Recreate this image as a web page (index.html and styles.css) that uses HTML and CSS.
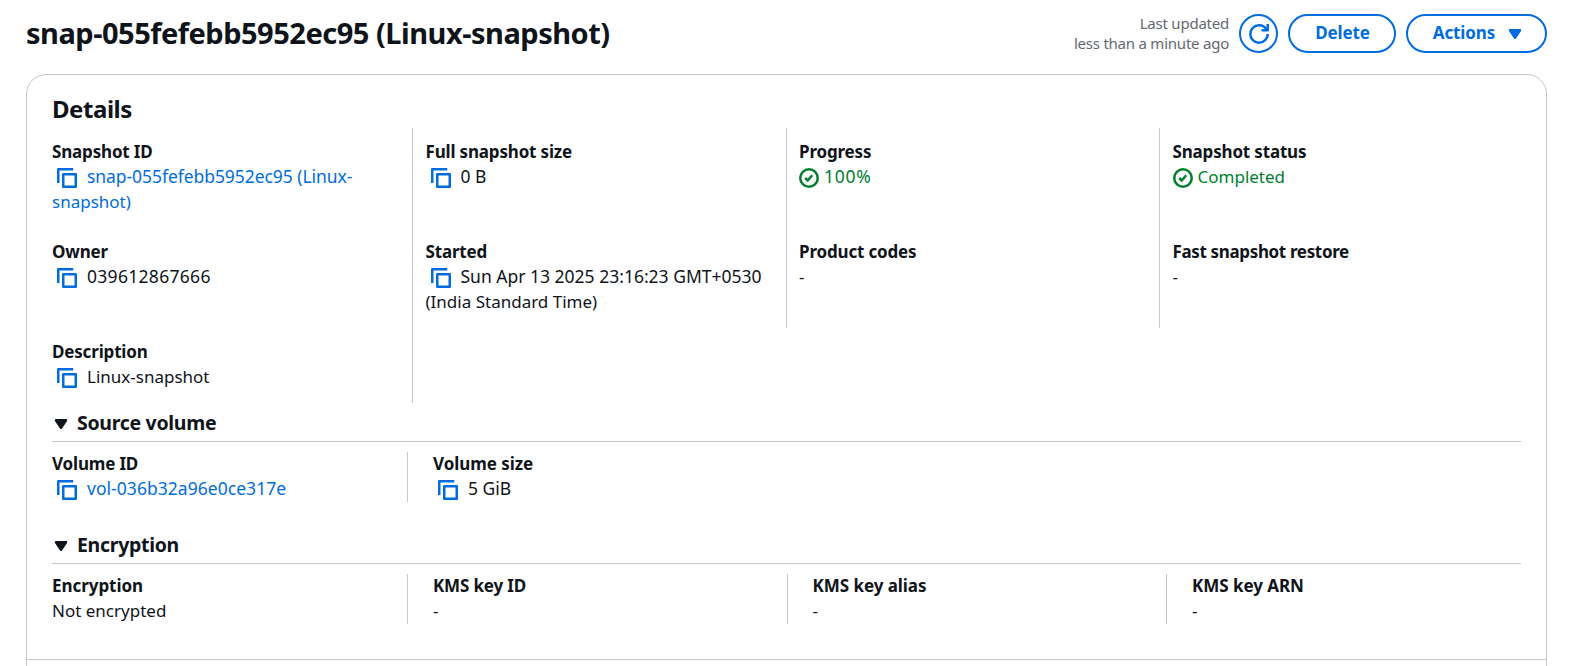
FILE: index.html
```
<!DOCTYPE html>
<html lang="en">
<head>
<meta charset="utf-8">
<title>Snapshot details</title>
<link rel="stylesheet" href="styles.css">
</head>
<body>
<svg class="defs" width="0" height="0">
  <symbol id="copy" viewBox="0 0 16 16"><path d="M15 5H5v10h10V5z"/><path d="M13 1H1v11"/></symbol>
  <symbol id="ok" viewBox="0 0 16 16"><circle cx="8" cy="8" r="7"/><path d="M5 8l2 2 3.6-4.2"/></symbol>
  <symbol id="caret" viewBox="0 0 16 16"><path d="M4 5h8l-4 6-4-6z"/></symbol>
  <symbol id="refresh" viewBox="0 0 16 16"><path d="M15 8c0 3.87-3.13 7-7 7s-7-3.13-7-7 3.13-7 7-7c2.79 0 5.2 1.63 6.33 4"/><path d="M10 5h5V0"/></symbol>
</svg>
<header class="page-header">
  <h1>snap-055fefebb5952ec95 (Linux-snapshot)</h1>
  <div class="actions">
    <p class="updated">Last updated<br>less than a minute ago</p>
    <button class="btn btn-round" aria-label="Refresh"><svg class="icon"><use href="#refresh"/></svg></button>
    <button class="btn btn-delete">Delete</button>
    <button class="btn btn-menu">Actions<svg class="icon solid"><use href="#caret"/></svg></button>
  </div>
</header>
<main class="panel">
  <h2>Details</h2>
  <div class="details">
    <div class="col">
      <dl class="cell"><dt>Snapshot ID</dt><dd><svg class="icon copy"><use href="#copy"/></svg><a><span class="id">snap-055fefebb5952ec95 (Linux-</span><br>snapshot)</a></dd></dl>
      <dl class="cell"><dt>Owner</dt><dd><svg class="icon copy"><use href="#copy"/></svg><span class="digits">039612867666</span></dd></dl>
      <dl class="cell last"><dt>Description</dt><dd><svg class="icon copy"><use href="#copy"/></svg>Linux-snapshot</dd></dl>
    </div>
    <div class="col">
      <dl class="cell"><dt>Full snapshot size</dt><dd><svg class="icon copy"><use href="#copy"/></svg><span class="short">0 B</span></dd></dl>
      <dl class="cell"><dt>Started</dt><dd><svg class="icon copy"><use href="#copy"/></svg><span class="date">Sun Apr 13 2025 23:16:23 GMT+0530</span><br>(India Standard Time)</dd></dl>
    </div>
    <div class="col">
      <dl class="cell"><dt>Progress</dt><dd class="ok"><svg class="icon"><use href="#ok"/></svg><span class="percent">100%</span></dd></dl>
      <dl class="cell"><dt>Product codes</dt><dd>-</dd></dl>
    </div>
    <div class="col">
      <dl class="cell"><dt>Snapshot status</dt><dd class="ok"><svg class="icon"><use href="#ok"/></svg>Completed</dd></dl>
      <dl class="cell"><dt class="tight">Fast snapshot restore</dt><dd>-</dd></dl>
    </div>
  </div>
  <section>
    <h3><svg class="icon solid"><use href="#caret"/></svg>Source volume</h3>
    <div class="row">
      <dl><dt>Volume ID</dt><dd><svg class="icon copy"><use href="#copy"/></svg><a class="volume">vol-036b32a96e0ce317e</a></dd></dl>
      <dl><dt class="spaced">Volume size</dt><dd><svg class="icon copy"><use href="#copy"/></svg><span class="short">5 GiB</span></dd></dl>
    </div>
  </section>
  <section>
    <h3><svg class="icon solid"><use href="#caret"/></svg>Encryption</h3>
    <div class="row">
      <dl><dt class="spaced">Encryption</dt><dd>Not encrypted</dd></dl>
      <dl><dt>KMS key ID</dt><dd>-</dd></dl>
      <dl><dt class="spaced">KMS key alias</dt><dd>-</dd></dl>
      <dl><dt class="spaced">KMS key ARN</dt><dd>-</dd></dl>
    </div>
  </section>
  <div class="panel-footer"></div>
</main>
</body>
</html>
```
FILE: styles.css
```
* { box-sizing: border-box; }
html { height: 100%; overflow: hidden; }
body {
  margin: 0;
  height: 666px;
  overflow: hidden;
  padding: 14px 23px 0 26px;
  background: #fff;
  color: #0f141a;
  font: 17px/25px "Noto Sans", "Open Sans", sans-serif;
}
h1, h2, h3, p, dl, dd { margin: 0; }
.defs { position: absolute; }

.page-header { display: flex; justify-content: space-between; height: 60px; }
h1 { font-size: 29px; line-height: 37px; font-weight: 700; letter-spacing: -0.49px; }
.actions { display: flex; gap: 10px; height: 39px; }
.updated { margin-top: -1px; font-size: 15px; line-height: 20px; letter-spacing: -0.23px; color: #656871; text-align: right; }
.btn {
  display: flex; align-items: center; justify-content: center;
  height: 39px; padding: 0 0 2px;
  border: 2px solid #006ce0; border-radius: 20px;
  background: #fff; color: #006ce0;
  font: 700 17px/25px "Noto Sans", sans-serif; letter-spacing: -0.1px;
}
.btn-round { width: 39px; padding: 0; }
.btn-delete { width: 108px; padding-left: 1px; }
.btn-menu { width: 141px; padding-left: 5px; }
.btn-menu .icon { margin: 2px 0 0 10px; }

.icon { width: 20px; height: 20px; flex: none; fill: none; stroke: currentColor; stroke-width: 2; stroke-linejoin: round; }
.icon.solid { fill: currentColor; }
.icon.copy { color: #006ce0; }

.panel { height: 620px; border: 1px solid #c6c6cd; border-radius: 20px 20px 0 0; padding: 19px 0 0; }
h2 { margin: 0 25px; height: 34px; font-size: 24px; line-height: 30px; font-weight: 700; letter-spacing: -0.45px; }

.details { display: grid; grid-template-columns: 374px 374px 373px 374px; align-items: start; padding-left: 12px; }
.col { border-right: 1px solid #c6c6cd; padding-left: 12.5px; }
.col:first-child { padding-left: 13px; }
.col:nth-child(3) { padding-left: 12px; }
.col:last-child { border-right: 0; }
.cell { height: 100px; padding-top: 11px; }
.cell.last { height: 75px; }
dt { font-weight: 700; letter-spacing: -0.17px; }
dd, dt { height: 25px; white-space: nowrap; }
dd .icon { vertical-align: -5px; margin-right: 5px; }
dd .icon.copy { margin: 0 10px 0 5px; }
a { color: #006ce0; }
.ok { color: #00802f; }

.spaced { letter-spacing: -0.05px; }
.tight { letter-spacing: -0.35px; }
.id, .digits, .date, .volume, .short, .percent { font-size: 17.5px; line-height: 20px; }
.id { letter-spacing: -0.06px; }
.digits { letter-spacing: 0.3px; }
.volume { letter-spacing: 0.04px; }
.percent { letter-spacing: 0.7px; }

section { margin: 0 25px 23px 25px; }
h3 {
  display: flex; height: 39px; padding: 7px 0 6px;
  border-bottom: 1px solid #c6c6cd;
  font-size: 19.5px; line-height: 25px; font-weight: 700; letter-spacing: -0.3px;
}
h3 .icon { margin: 4px 6px 0 -1px; }
.row { display: grid; grid-template-columns: repeat(4, 355px); gap: 24.5px; padding-top: 10px; }
.row dl { height: 50px; }
.row dt { height: 24px; line-height: 23px; }
.row dl + dl { border-left: 1px solid #c6c6cd; margin-left: -24.5px; padding-left: 25px; }
.panel-footer { margin-top: 35px; border-top: 1px solid #c6c6cd; }
```
